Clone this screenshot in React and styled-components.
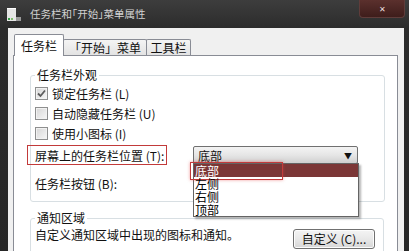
import styled, { createGlobalStyle } from 'styled-components'

const GlobalStyle = createGlobalStyle`
html, body {
  margin: 0;
  padding: 0;
}
body {
  background: #262626;
  font-family: "Noto Sans CJK SC", "Noto Sans", sans-serif;
}
`

const Window = styled.div`
width: 409px;
height: 251px;
overflow: hidden;
display: flex;
flex-direction: column;
background: linear-gradient(#3d3d3d, #2c2c2c 28px, #262626);
`

const TitleBar = styled.div`
height: 28px;
flex: none;
display: flex;
align-items: flex-start;
`

const AppIcon = styled.svg`
flex: none;
margin: 8px 0 0 7px;
`

const Title = styled.div`
margin: 6px 0 0 9px;
font-size: 10.5px;
line-height: 16px;
color: #d2d2d2;
font-feature-settings: "halt";
`

const CloseButton = styled.div`
margin: 0 4px 0 auto;
width: 46px;
height: 18px;
box-sizing: border-box;
border: 1px solid #5f3c3a;
border-top: none;
border-radius: 0 0 4px 4px;
background: linear-gradient(#5b302d, #3e1d1b);
color: #e8dede;
font-size: 8px;
line-height: 1;
display: flex;
align-items: center;
justify-content: center;
`

const Client = styled.div`
flex: 1;
margin: 0 5px 0 8px;
padding: 6px 6px 0 5px;
background: #f0f0f0;
display: flex;
flex-direction: column;
`

const TabStrip = styled.div`
height: 21px;
flex: none;
display: flex;
align-items: flex-end;
padding-left: 2px;
`

const Tab = styled.div`
box-sizing: border-box;
width: ${p => p.$w}px;
height: ${p => (p.$active ? 22 : 16)}px;
margin: 0 0 ${p => (p.$active ? -1 : 0)}px -1px;
border: 1px solid #898c95;
border-bottom: none;
border-radius: 2px 2px 0 0;
background: ${p => (p.$active ? '#fff' : 'linear-gradient(#f4f4f4, #e3e3e3)')};
position: relative;
z-index: ${p => (p.$active ? 2 : 1)};
display: flex;
align-items: center;
justify-content: center;
font-size: 12px;
color: #111;
white-space: nowrap;
`

const Panel = styled.div`
flex: 1;
background: #fff;
border: 1px solid #898c95;
border-bottom: none;
padding: 11px 12px 0 16px;
display: flex;
flex-direction: column;
`

const Group = styled.fieldset`
margin: ${p => p.$top || 0}px ${p => p.$right || 0}px 0 0;
min-width: 0;
border: 1px solid #d8dfe3;
border-radius: 3px;
padding: 0 8px 8px 4px;
`

const Legend = styled.legend`
padding: 0 2px;
font-size: 12px;
line-height: 16px;
color: #111;
`

const CheckRow = styled.div`
height: 20px;
display: flex;
align-items: center;
gap: 4px;
font-size: 12px;
color: #111;
`

const Box = styled.span`
width: 13px;
height: 13px;
box-sizing: border-box;
border: 1px solid #8e8f8f;
background: linear-gradient(135deg, #d6d6d6, #f7f7f7);
box-shadow: inset 0 0 0 1px #f2f2f2;
display: flex;
align-items: center;
justify-content: center;
`

const FieldRow = styled.div`
height: 20px;
margin-top: ${p => p.$top}px;
display: flex;
align-items: center;
font-size: 12px;
color: #111;
`

const FieldLabel = styled.div`
box-sizing: border-box;
width: 140px;
height: 20px;
margin-left: -8px;
padding-left: 7px;
display: flex;
align-items: center;
border: 1px solid ${p => (p.$marked ? '#c23a3a' : 'transparent')};
`

const ComboWrap = styled.div`
position: relative;
margin-left: 26px;
`

const Combo = styled.div`
box-sizing: border-box;
width: 165px;
height: 18px;
border: 1px solid #707070;
border-radius: 2px;
background: linear-gradient(#f3f3f3, #e6e6e6 50%, #cfcfcf);
padding: 0 5px 0 4px;
display: flex;
align-items: center;
justify-content: space-between;
font-size: 12px;
`

const Arrow = styled.span`
font-size: 8px;
color: #111;
`

const DropList = styled.div`
position: absolute;
top: 17px;
left: 0;
width: 166px;
box-sizing: border-box;
background: #fff;
border: 1px solid #646464;
box-shadow: 2px 2px 2px rgba(0, 0, 0, 0.3);
z-index: 5;
`

const Option = styled.div`
position: relative;
height: 13px;
line-height: 13px;
padding-left: 1px;
font-size: 12px;
background: ${p => (p.$selected ? '#7b3636' : 'transparent')};
color: ${p => (p.$selected ? '#fff' : '#000')};
`

const Mark = styled.div`
position: absolute;
left: -4px;
top: -2px;
width: 93px;
height: 18px;
box-sizing: border-box;
border: 1px solid #c23a3a;
box-shadow: 0 0 3px rgba(230, 60, 60, 0.5);
`

const NoticeRow = styled.div`
display: flex;
justify-content: space-between;
align-items: flex-start;
font-size: 12px;
line-height: 18px;
color: #111;
`

const Button = styled.div`
box-sizing: border-box;
width: 82px;
height: 20px;
margin-top: 3px;
border: 1px solid #707070;
border-radius: 3px;
background: linear-gradient(#f4f4f4, #e8e8e8 50%, #d6d6d6);
box-shadow: inset 0 0 0 1px #fcfcfc;
display: flex;
align-items: center;
justify-content: center;
font-size: 12px;
`

const Check = ({ checked }) => (
  <Box>
    {checked && (
      <svg width="9" height="9" viewBox="0 0 9 9">
        <path d="M1 4.5 L3.5 7 L8 1.5" fill="none" stroke="#5c5c5c" strokeWidth="1.8" />
      </svg>
    )}
  </Box>
)

const options = ['底部', '左侧', '右侧', '顶部']

const App = () => {
  return (
    <>
      <GlobalStyle />
      <Window>
        <TitleBar>
          <AppIcon width="14" height="13" viewBox="0 0 14 13">
            <rect x="0" y="0" width="9" height="13" fill="#e6e6e6" />
            <rect x="0" y="0" width="9" height="1" fill="#ffffff" />
            <rect x="9" y="9" width="5" height="4" fill="#9a9a9a" />
            <rect x="1" y="10" width="2" height="2" fill="#3aa04a" />
            <rect x="4" y="10" width="2" height="2" fill="#7fbf6a" />
          </AppIcon>
          <Title>任务栏和「开始」菜单属性</Title>
          <CloseButton>✕</CloseButton>
        </TitleBar>
        <Client>
          <TabStrip>
            <Tab $active $w={50}>任务栏</Tab>
            <Tab $w={84}>「开始」菜单</Tab>
            <Tab $w={45}>工具栏</Tab>
          </TabStrip>
          <Panel>
            <Group $right={0}>
              <Legend>任务栏外观</Legend>
              <CheckRow><Check checked />锁定任务栏 (L)</CheckRow>
              <CheckRow><Check />自动隐藏任务栏 (U)</CheckRow>
              <CheckRow><Check />使用小图标 (I)</CheckRow>
              <FieldRow $top={2}>
                <FieldLabel $marked>屏幕上的任务栏位置 (T):</FieldLabel>
                <ComboWrap>
                  <Combo>
                    底部
                    <Arrow>▼</Arrow>
                  </Combo>
                  <DropList>
                    {options.map((o, i) => (
                      <Option key={o} $selected={i === 0}>
                        {o}
                        {i === 0 && <Mark />}
                      </Option>
                    ))}
                  </DropList>
                </ComboWrap>
              </FieldRow>
              <FieldRow $top={8}>
                <FieldLabel>任务栏按钮 (B):</FieldLabel>
              </FieldRow>
            </Group>
            <Group $top={8} $right={1}>
              <Legend>通知区域</Legend>
              <NoticeRow>
                自定义通知区域中出现的图标和通知。
                <Button>自定义 (C)...</Button>
              </NoticeRow>
            </Group>
          </Panel>
        </Client>
      </Window>
    </>
  )
}

export default App
